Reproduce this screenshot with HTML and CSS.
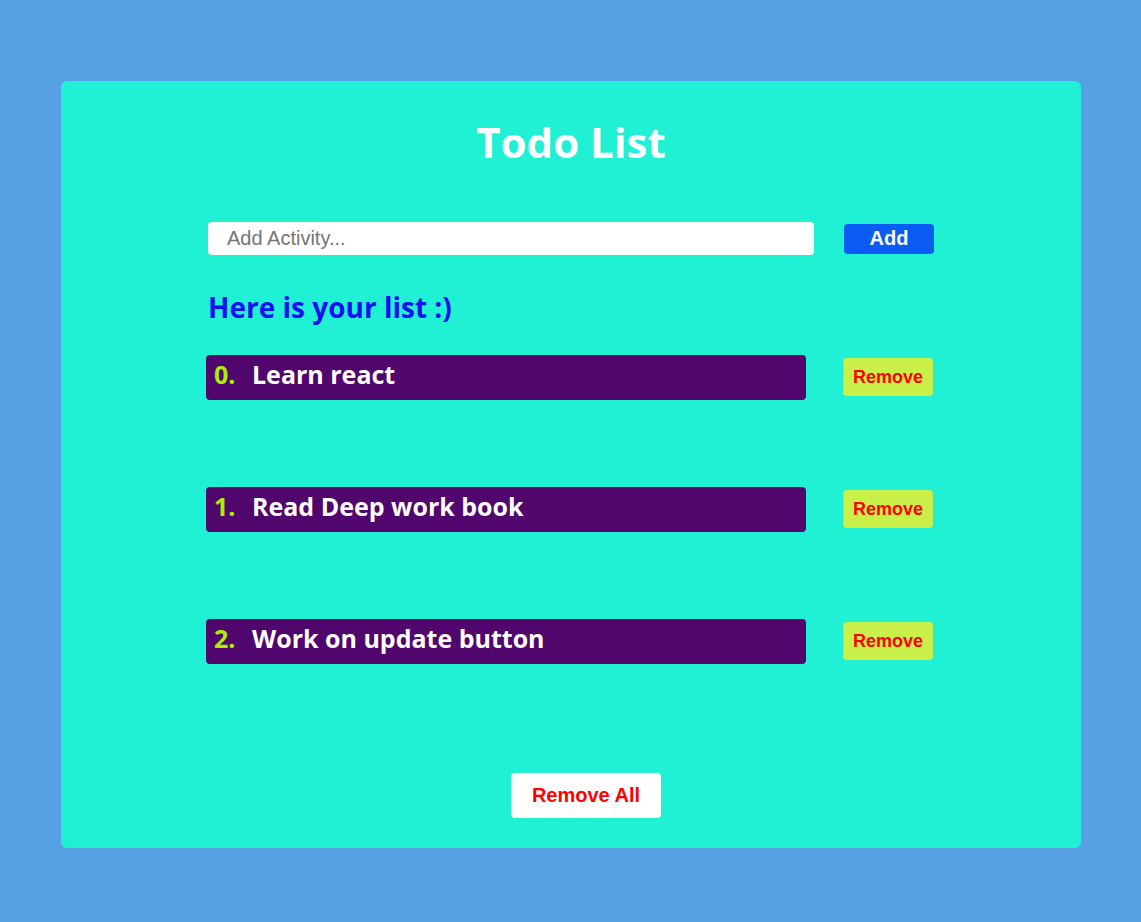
FILE: index.html
```html
<!DOCTYPE html>
<html>
<head>
<meta charset="utf-8">
<title>Todo List</title>
<link rel="stylesheet" href="styles.css">
</head>
<body>
<div class="card">
  <h1 class="title">Todo List</h1>
  <div class="form">
    <input class="input" type="text" placeholder="Add Activity...">
    <button class="add">Add</button>
  </div>
  <div class="list-wrap">
    <h2 class="subtitle">Here is your list :)</h2>
    <ul class="list">
      <li class="row">
        <div class="item"><span class="num">0.</span><span class="text">Learn react</span></div>
        <button class="remove">Remove</button>
      </li>
      <li class="row">
        <div class="item"><span class="num">1.</span><span class="text">Read Deep work book</span></div>
        <button class="remove">Remove</button>
      </li>
      <li class="row">
        <div class="item"><span class="num">2.</span><span class="text">Work on update button</span></div>
        <button class="remove">Remove</button>
      </li>
    </ul>
  </div>
  <div class="footer">
    <button class="remove-all">Remove All</button>
  </div>
</div>
</body>
</html>
```
FILE: styles.css
```css
html, body {
  margin: 0;
  padding: 0;
}
body {
  background: #57a0e4;
  font-family: "Open Sans", "Noto Sans", sans-serif;
  padding: 81px 60px 74px 61px;
}
.card {
  background: #20f0d4;
  border-radius: 6px;
  height: 767px;
  box-sizing: border-box;
  padding-top: 112px;
  position: relative;
}
.title {
  margin: 0;
  color: #fff;
  font-size: 42px;
  font-weight: 700;
  text-align: center;
  line-height: 1;
  position: absolute;
  top: 40px;
  left: 0;
  right: 0;
}
.form {
  width: 726px;
  margin: 0 auto;
  display: flex;
  align-items: center;
  justify-content: space-between;
  margin-top: 29px;
}
.input {
  width: 606px;
  height: 33px;
  box-sizing: border-box;
  border: none;
  border-radius: 4px;
  padding: 0 19px;
  font-family: "Liberation Sans", Arial, sans-serif;
  font-size: 20px;
  outline: none;
  background: #fff;
}
.input::placeholder {
  color: #757575;
}
.add {
  width: 90px;
  height: 30px;
  border: none;
  border-radius: 4px;
  background: #0b5cf5;
  color: #fff;
  font-family: "Liberation Sans", Arial, sans-serif;
  font-weight: 700;
  font-size: 20px;
  padding: 0;
}
.list-wrap {
  width: 730px;
  margin: 0 auto;
}
.subtitle {
  margin: 33px 0 0 2px;
  color: #1410f2;
  font-size: 28px;
  font-weight: 700;
  line-height: 38px;
}
.list {
  list-style: none;
  margin: 29px 0 0;
  padding: 0;
  display: flex;
  flex-direction: column;
  gap: 87px;
}
.row {
  display: flex;
  align-items: flex-start;
  justify-content: space-between;
}
.item {
  width: 600px;
  height: 45px;
  background: #50066c;
  border-radius: 4px;
  box-sizing: border-box;
  padding: 0 8px;
  display: flex;
  align-items: center;
  font-size: 25px;
  font-weight: 700;
  padding-bottom: 7px;
}
.num {
  color: #a8f000;
  width: 38px;
}
.text {
  color: #fff;
}
.remove {
  width: 90px;
  height: 38px;
  border: none;
  border-radius: 4px;
  background: #c9ef49;
  color: #f00;
  font-family: "Liberation Sans", Arial, sans-serif;
  font-weight: 700;
  font-size: 18px;
  padding: 0;
  margin: 3px 3px 0 0;
}
.footer {
  display: flex;
  justify-content: center;
  margin-top: 109px;
  padding-left: 30px;
}
.remove-all {
  width: 150px;
  height: 45px;
  border: none;
  border-radius: 4px;
  background: #fff;
  color: #f00;
  font-family: "Liberation Sans", Arial, sans-serif;
  font-weight: 700;
  font-size: 20px;
  padding: 0;
}
```
